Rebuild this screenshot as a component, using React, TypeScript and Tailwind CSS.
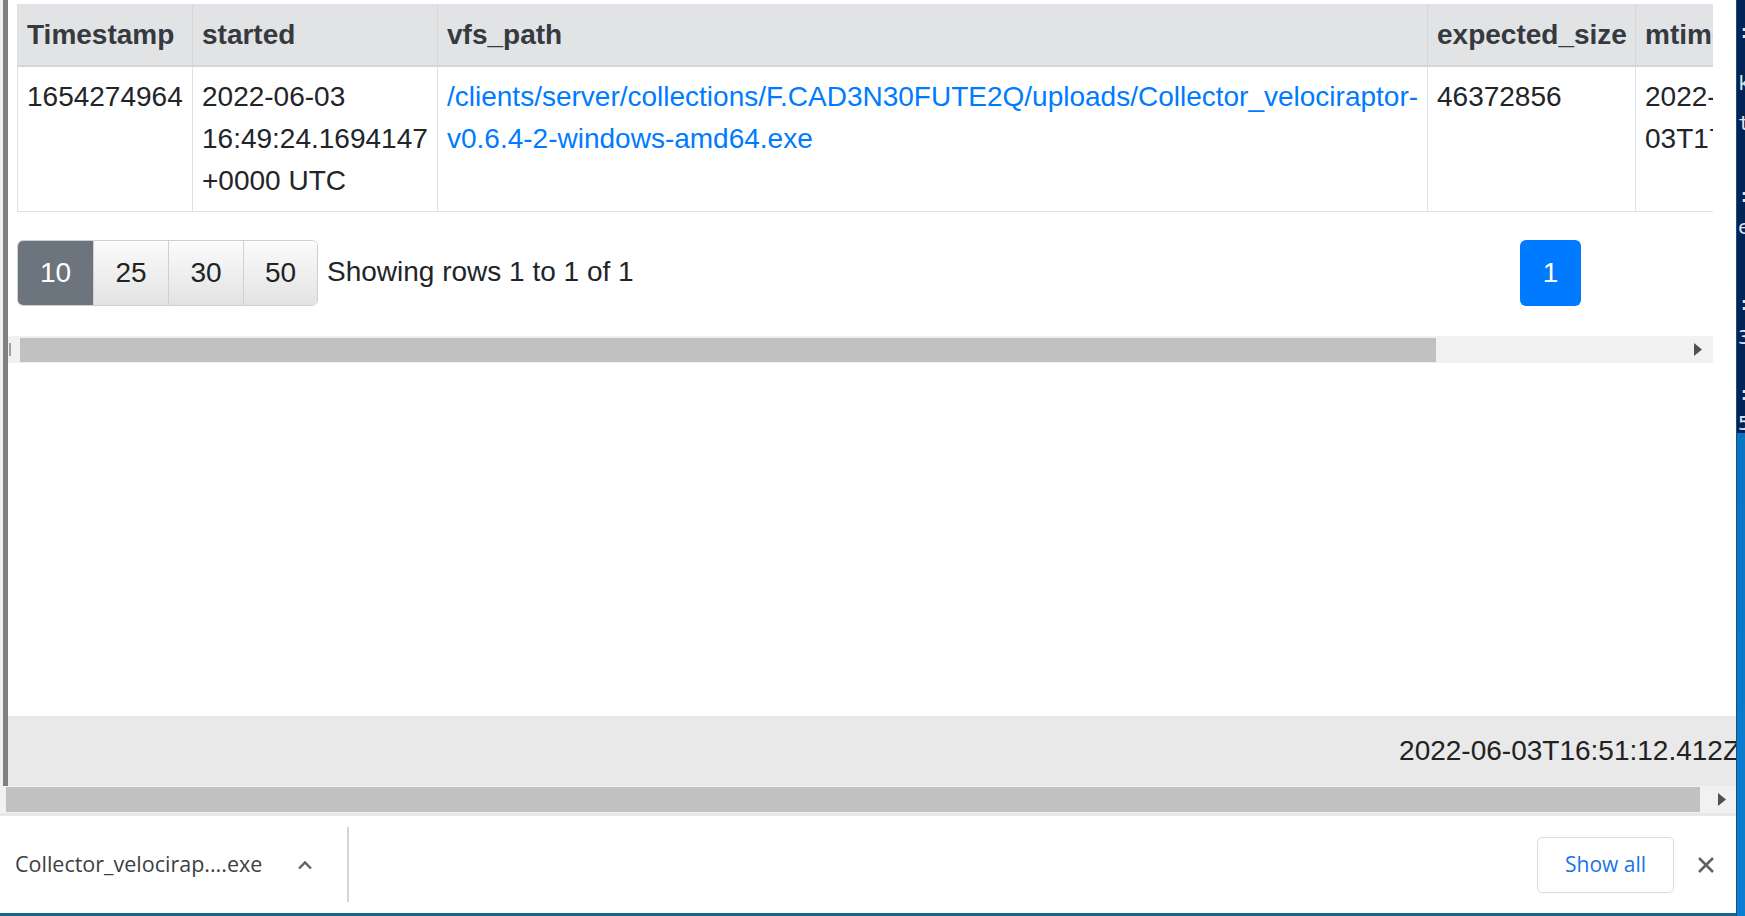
import React from "react";

const arial = "font-['Liberation_Sans',Arial,sans-serif]";
const ui = "font-['Open_Sans','Noto_Sans',sans-serif]";

// small black triangle used by the fake scrollbars
const ArrowRight = () => (
  <svg width="8" height="13" viewBox="0 0 8 13">
    <path d="M0 0L8 6.5L0 13Z" fill="#505050" />
  </svg>
);

const th = "border-l border-[#d6d8db] first:border-l-0 pl-[9px] pr-[10px] pt-[9px] pb-[9px] text-left font-bold align-top";
const td = "border-l border-[#dee2e6] first:border-l-0 pl-[9px] pr-[10px] py-[9px] align-top";

const App = () => {
  return (
    <div className={`flex h-[916px] w-[1745px] overflow-hidden bg-white ${arial}`}>
      <div className="flex w-[1736px] flex-col">
        {/* page */}
        <div className="flex h-[786px]">
          <div className="w-[3px] bg-[#f0f0f0]" />
          <div className="w-[5px] bg-[#808080]" />
          <div className="flex flex-1 flex-col">
            <div className="flex w-[1705px] flex-col overflow-hidden pt-[4px]">
              {/* table */}
              <div className="w-[1696px] ml-[9px] overflow-hidden">
                <table className="table-fixed border-collapse border border-[#dee2e6] text-[28px] leading-[42px] w-[1818px]">
                  <colgroup>
                    <col className="w-[175px]" />
                    <col className="w-[245px]" />
                    <col className="w-[990px]" />
                    <col className="w-[208px]" />
                    <col className="w-[200px]" />
                  </colgroup>
                  <thead>
                    <tr className="bg-[#e2e3e5] text-[#343a40] border-b-2 border-[#d3d6d9]">
                      <th className={th}>Timestamp</th>
                      <th className={th}>started</th>
                      <th className={th}>vfs_path</th>
                      <th className={th}>expected_size</th>
                      <th className={th}>mtime</th>
                    </tr>
                  </thead>
                  <tbody className="text-[#212529]">
                    <tr className="border-b border-[#dee2e6]">
                      <td className={td}>1654274964</td>
                      <td className={`${td} whitespace-nowrap`}>
                        2022-06-03
                        <br />
                        16:49:24.1694147
                        <br />
                        +0000 UTC
                      </td>
                      <td className={`${td} whitespace-nowrap text-[#007bff]`}>
                        /clients/server/collections/F.CAD3N30FUTE2Q/uploads/Collector_velociraptor-
                        <br />
                        v0.6.4-2-windows-amd64.exe
                      </td>
                      <td className={td}>46372856</td>
                      <td className={`${td} whitespace-nowrap`}>
                        2022-
                        <br />
                        03T17:43:12Z
                      </td>
                    </tr>
                  </tbody>
                </table>
              </div>

              {/* pagination */}
              <div className="mt-[28px] ml-[9px] flex h-[66px] items-center">
                <div className="flex h-[66px] overflow-hidden rounded-[6px] border border-[#cfcfcf] text-[28px]">
                  <button className="w-[75px] bg-[#6c757d] text-white">10</button>
                  <button className="w-[75px] border-l border-[#d0d0d0] bg-linear-to-b from-[#fbfbfb] to-[#e3e3e3] text-[#222]">25</button>
                  <button className="w-[75px] border-l border-[#d0d0d0] bg-linear-to-b from-[#fbfbfb] to-[#e3e3e3] text-[#222]">30</button>
                  <button className="w-[74px] border-l border-[#d0d0d0] bg-linear-to-b from-[#fbfbfb] to-[#e3e3e3] text-[#222]">50</button>
                </div>
                <span className="ml-[9px] -mt-[2px] text-[28px] text-[#212529]">Showing rows 1 to 1 of 1</span>
                <button className="ml-auto mr-[132px] h-[66px] w-[61px] rounded-[6px] bg-[#007bff] text-[28px] text-white">1</button>
              </div>

              {/* inner scrollbar */}
              <div className="mt-[30px] flex h-[27px] items-center bg-[#f1f1f1]">
                <div className="ml-[1px] h-[13px] w-[2px] bg-[#a0a0a0]" />
                <div className="ml-[9px] h-[24px] w-[1416px] bg-[#c1c1c1]" />
                <div className="ml-auto mr-[11px] flex">
                  <ArrowRight />
                </div>
              </div>
            </div>

            <div className="flex-1" />

            {/* footer */}
            <div className="flex h-[70px] items-center justify-end overflow-hidden bg-[#e9e9e9]">
              <span className="-mr-[4px] text-[28px] text-[#222]">2022-06-03T16:51:12.412Z</span>
            </div>
          </div>
        </div>

        {/* page scrollbar */}
        <div className="flex h-[27px] items-center bg-[#f1f1f1]">
          <div className="ml-[6px] h-[25px] w-[1694px] bg-[#c1c1c1]" />
          <div className="ml-auto mr-[10px] flex">
            <ArrowRight />
          </div>
        </div>

        {/* download shelf */}
        <div className={`flex h-[103px] items-center border-t-[3px] border-b-[3px] border-t-[#e8e8e8] border-b-[#16658f] bg-white ${ui}`}>
          <span className="ml-[15px] text-[21.5px] text-[#3c4043]">Collector_velocirap....exe</span>
          <svg className="ml-[35px]" width="16" height="10" viewBox="0 0 16 10">
            <path d="M2 8.5L8 2.5L14 8.5" fill="none" stroke="#5f6368" strokeWidth="2.4" />
          </svg>
          <div className="ml-[34px] h-[75px] w-[2px] bg-[#d5d5d5]" />
          <button className="ml-auto h-[56px] w-[137px] rounded-[5px] border border-[#dadce0] text-[21px] text-[#1a73e8]">Show all</button>
          <svg className="ml-[23px] mr-[21px]" width="18" height="18" viewBox="0 0 18 18">
            <path d="M2 2L16 16M16 2L2 16" stroke="#5f6368" strokeWidth="2.6" />
          </svg>
        </div>
      </div>

      {/* desktop behind the browser */}
      <div className="flex w-[9px] flex-col border-l border-[#1c4f80]">
        <div className="flex h-[433px] flex-col overflow-hidden bg-[#012456] pl-[1px] font-['DejaVu_Sans_Mono',monospace] text-[20px] leading-[26px] text-[#dfe3ee]">
          <div className="mt-[18px] h-[26px]">:</div>
          <div className="mt-[26px] h-[26px]">k</div>
          <div className="mt-[14px] h-[26px]">t</div>
          <div className="mt-[46px] h-[26px]">:</div>
          <div className="mt-[6px] h-[26px]">e</div>
          <div className="mt-[50px] h-[26px]">:</div>
          <div className="mt-[8px] h-[26px]">3</div>
          <div className="mt-[30px] h-[26px]">:</div>
          <div className="mt-[4px] h-[26px]">5</div>
        </div>
        <div className="flex-1 bg-linear-to-b from-[#0a74c4] to-[#0b7fd3]" />
      </div>
    </div>
  );
};

export default App;
